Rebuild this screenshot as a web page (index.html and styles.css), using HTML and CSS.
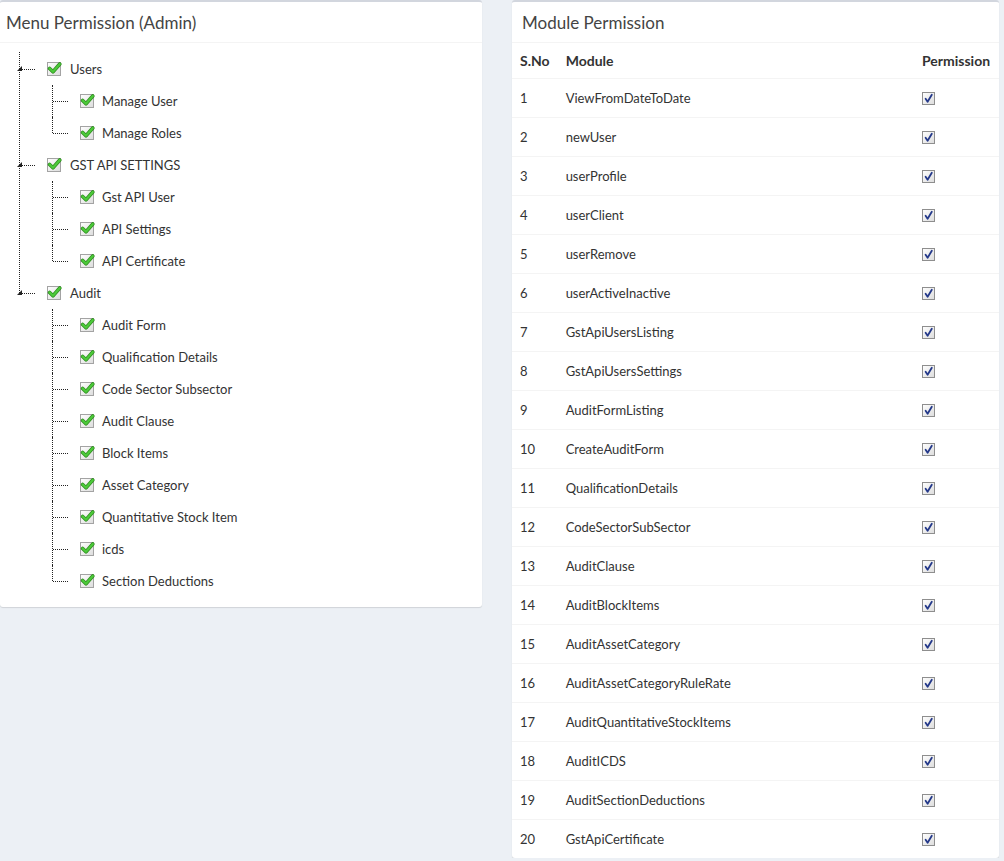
FILE: index.html
```html
<!DOCTYPE html>
<html>
<head>
<meta charset="utf-8">
<link rel="stylesheet" href="styles.css">
</head>
<body>
<svg width="0" height="0" class="defs">
  <defs>
    <linearGradient id="gbg" x1="0" y1="0" x2="1" y2="1">
      <stop offset="0" stop-color="#ffffff"/>
      <stop offset="1" stop-color="#dcdcdc"/>
    </linearGradient>
    <symbol id="gcheck" viewBox="0 0 15 15">
      <rect x="0.5" y="1.5" width="13" height="13" fill="url(#gbg)" stroke="#a3a3a3"/>
      <path d="M2.6 7.4 L6 10.8 L12.8 3" fill="none" stroke="#2e8a1e" stroke-width="3.6" stroke-linecap="round" stroke-linejoin="round"/>
      <path d="M2.6 7.4 L6 10.8 L12.8 3" fill="none" stroke="#4cc93a" stroke-width="2.2" stroke-linecap="round" stroke-linejoin="round"/>
    </symbol>
    <symbol id="bcheck" viewBox="0 0 13 13">
      <rect x="0.5" y="0.5" width="12" height="12" fill="url(#gbg)" stroke="#8e8e8e"/>
      <path d="M3.6 6.8 L5.6 9.8 L9.8 2.8" fill="none" stroke="#24398a" stroke-width="1.8" stroke-linecap="round" stroke-linejoin="round"/>
    </symbol>
  </defs>
</svg>
<div class="page">
  <div class="box box-left">
    <div class="box-header"><h3 class="box-title">Menu Permission (Admin)</h3></div>
    <div class="tree">
      <ul class="l1">
        <li class="n1">
          <div class="row"><span class="arrow"></span><span class="hline"></span><svg class="gchk"><use href="#gcheck"/></svg><span class="label">Users</span></div>
          <ul class="l2">
            <li class="n2"><div class="row"><span class="hline"></span><svg class="gchk"><use href="#gcheck"/></svg><span class="label">Manage User</span></div></li>
            <li class="n2"><div class="row"><span class="hline"></span><svg class="gchk"><use href="#gcheck"/></svg><span class="label">Manage Roles</span></div></li>
          </ul>
        </li>
        <li class="n1">
          <div class="row"><span class="arrow"></span><span class="hline"></span><svg class="gchk"><use href="#gcheck"/></svg><span class="label">GST API SETTINGS</span></div>
          <ul class="l2">
            <li class="n2"><div class="row"><span class="hline"></span><svg class="gchk"><use href="#gcheck"/></svg><span class="label">Gst API User</span></div></li>
            <li class="n2"><div class="row"><span class="hline"></span><svg class="gchk"><use href="#gcheck"/></svg><span class="label">API Settings</span></div></li>
            <li class="n2"><div class="row"><span class="hline"></span><svg class="gchk"><use href="#gcheck"/></svg><span class="label">API Certificate</span></div></li>
          </ul>
        </li>
        <li class="n1">
          <div class="row"><span class="arrow"></span><span class="hline"></span><svg class="gchk"><use href="#gcheck"/></svg><span class="label">Audit</span></div>
          <ul class="l2">
            <li class="n2"><div class="row"><span class="hline"></span><svg class="gchk"><use href="#gcheck"/></svg><span class="label">Audit Form</span></div></li>
            <li class="n2"><div class="row"><span class="hline"></span><svg class="gchk"><use href="#gcheck"/></svg><span class="label">Qualification Details</span></div></li>
            <li class="n2"><div class="row"><span class="hline"></span><svg class="gchk"><use href="#gcheck"/></svg><span class="label">Code Sector Subsector</span></div></li>
            <li class="n2"><div class="row"><span class="hline"></span><svg class="gchk"><use href="#gcheck"/></svg><span class="label">Audit Clause</span></div></li>
            <li class="n2"><div class="row"><span class="hline"></span><svg class="gchk"><use href="#gcheck"/></svg><span class="label">Block Items</span></div></li>
            <li class="n2"><div class="row"><span class="hline"></span><svg class="gchk"><use href="#gcheck"/></svg><span class="label">Asset Category</span></div></li>
            <li class="n2"><div class="row"><span class="hline"></span><svg class="gchk"><use href="#gcheck"/></svg><span class="label">Quantitative Stock Item</span></div></li>
            <li class="n2"><div class="row"><span class="hline"></span><svg class="gchk"><use href="#gcheck"/></svg><span class="label">icds</span></div></li>
            <li class="n2"><div class="row"><span class="hline"></span><svg class="gchk"><use href="#gcheck"/></svg><span class="label">Section Deductions</span></div></li>
          </ul>
        </li>
      </ul>
    </div>
  </div>

  <div class="box box-right">
    <div class="box-header"><h3 class="box-title">Module Permission</h3></div>
    <table class="table">
      <thead>
        <tr><th class="c-no">S.No</th><th class="c-mod">Module</th><th class="c-perm">Permission</th></tr>
      </thead>
      <tbody>
        <tr><td>1</td><td>ViewFromDateToDate</td><td><svg class="bchk"><use href="#bcheck"/></svg></td></tr>
        <tr><td>2</td><td>newUser</td><td><svg class="bchk"><use href="#bcheck"/></svg></td></tr>
        <tr><td>3</td><td>userProfile</td><td><svg class="bchk"><use href="#bcheck"/></svg></td></tr>
        <tr><td>4</td><td>userClient</td><td><svg class="bchk"><use href="#bcheck"/></svg></td></tr>
        <tr><td>5</td><td>userRemove</td><td><svg class="bchk"><use href="#bcheck"/></svg></td></tr>
        <tr><td>6</td><td>userActiveInactive</td><td><svg class="bchk"><use href="#bcheck"/></svg></td></tr>
        <tr><td>7</td><td>GstApiUsersListing</td><td><svg class="bchk"><use href="#bcheck"/></svg></td></tr>
        <tr><td>8</td><td>GstApiUsersSettings</td><td><svg class="bchk"><use href="#bcheck"/></svg></td></tr>
        <tr><td>9</td><td>AuditFormListing</td><td><svg class="bchk"><use href="#bcheck"/></svg></td></tr>
        <tr><td>10</td><td>CreateAuditForm</td><td><svg class="bchk"><use href="#bcheck"/></svg></td></tr>
        <tr><td>11</td><td>QualificationDetails</td><td><svg class="bchk"><use href="#bcheck"/></svg></td></tr>
        <tr><td>12</td><td>CodeSectorSubSector</td><td><svg class="bchk"><use href="#bcheck"/></svg></td></tr>
        <tr><td>13</td><td>AuditClause</td><td><svg class="bchk"><use href="#bcheck"/></svg></td></tr>
        <tr><td>14</td><td>AuditBlockItems</td><td><svg class="bchk"><use href="#bcheck"/></svg></td></tr>
        <tr><td>15</td><td>AuditAssetCategory</td><td><svg class="bchk"><use href="#bcheck"/></svg></td></tr>
        <tr><td>16</td><td>AuditAssetCategoryRuleRate</td><td><svg class="bchk"><use href="#bcheck"/></svg></td></tr>
        <tr><td>17</td><td>AuditQuantitativeStockItems</td><td><svg class="bchk"><use href="#bcheck"/></svg></td></tr>
        <tr><td>18</td><td>AuditICDS</td><td><svg class="bchk"><use href="#bcheck"/></svg></td></tr>
        <tr><td>19</td><td>AuditSectionDeductions</td><td><svg class="bchk"><use href="#bcheck"/></svg></td></tr>
        <tr><td>20</td><td>GstApiCertificate</td><td><svg class="bchk"><use href="#bcheck"/></svg></td></tr>
      </tbody>
    </table>
  </div>
</div>
</body>
</html>
```

FILE: styles.css
```css
html, body {
  margin: 0;
  padding: 0;
}
body {
  background: #ecf0f5;
  font-family: "Lato", "Open Sans", "Liberation Sans", sans-serif;
  font-size: 13px;
  color: #333;
}
.defs {
  position: absolute;
  width: 0;
  height: 0;
}
.page {
  display: flex;
  align-items: flex-start;
  gap: 30px;
}
.box {
  background: #fff;
  border-top: 2px solid #d2d6de;
  border-radius: 3px;
  box-shadow: 0 1px 1px rgba(0, 0, 0, 0.12);
}
.box-left {
  width: 482px;
  padding-bottom: 10px;
}
.box-right {
  width: 487px;
}
.box-header {
  height: 40px;
  border-bottom: 1px solid #f4f4f4;
  display: flex;
  align-items: center;
  padding: 0 6px;
}
.box-right .box-header {
  padding: 0 10px;
}
.box-title {
  margin: 0;
  font-size: 17px;
  font-weight: normal;
  color: #444;
}

/* tree */
.tree {
  padding-top: 10px;
}
.tree ul {
  list-style: none;
  margin: 0;
  padding: 0;
}
.n1, .n2 {
  position: relative;
}
.n1::before {
  content: "";
  position: absolute;
  left: 19px;
  top: -1px;
  bottom: 0;
  border-left: 1px dotted #222;
}
.n1:last-child::before {
  bottom: auto;
  height: 17px;
}
.n2::before {
  content: "";
  position: absolute;
  left: 52px;
  top: 0;
  bottom: 0;
  border-left: 1px dotted #222;
}
.n2:last-child::before {
  bottom: auto;
  height: 16px;
}
.row {
  height: 32px;
  display: flex;
  align-items: center;
  position: relative;
}
.n1 > .row {
  padding-left: 20px;
}
.n2 > .row {
  padding-left: 53px;
}
.hline {
  width: 15px;
  border-top: 1px dotted #222;
  margin-right: 12px;
}
.arrow {
  position: absolute;
  left: 17px;
  top: 13px;
  width: 0;
  height: 0;
  border-bottom: 5px solid #222;
  border-left: 5px solid transparent;
}
.gchk {
  width: 15px;
  height: 15px;
  margin-top: -2px;
  flex: none;
}
.label {
  margin-left: 8px;
  color: #333;
}
.n2 .label {
  margin-left: 7px;
}

/* table */
.table {
  width: 100%;
  border-collapse: collapse;
}
.table th, .table td {
  padding: 0 8px;
  text-align: left;
  border-top: 1px solid #f4f4f4;
  vertical-align: middle;
}
.table thead th {
  height: 35px;
  border-top: none;
  border-bottom: 1px solid #f4f4f4;
  font-weight: bold;
  font-size: 14px;
  color: #333;
}
.table td {
  height: 38px;
}
.table tbody tr:first-child td {
  border-top: none;
}
.c-no {
  width: 27px;
}
.c-perm {
  width: 69px;
}
.bchk {
  width: 13px;
  height: 13px;
  display: block;
}
```
